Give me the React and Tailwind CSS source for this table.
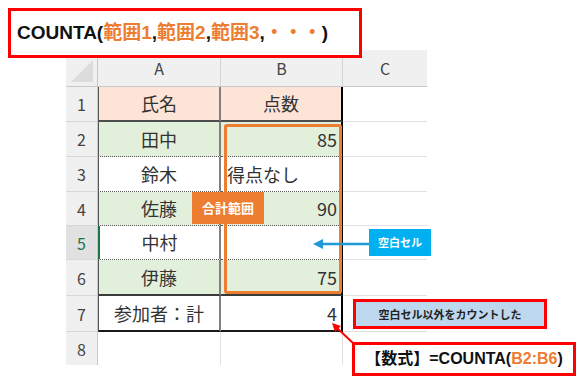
import React from "react";

const jp = "font-['Noto_Sans_CJK_JP',sans-serif]";
const orange = "text-[#ed7d31]";

const rows = [
  {
    n: "1",
    a: "氏名",
    b: "点数",
    h: "h-[35px]",
    bg: "bg-[#fce4d6]",
    line: "border-b-2 border-b-[#4d4d4d]",
    bAlign: "justify-center",
  },
  {
    n: "2",
    a: "田中",
    b: "85",
    h: "h-[35px]",
    bg: "bg-[#e2efda]",
    line: "border-b [border-bottom-style:dotted] border-b-[#555]",
    bAlign: "justify-end pr-[4px]",
  },
  {
    n: "3",
    a: "鈴木",
    b: "得点なし",
    h: "h-[35px]",
    bg: "bg-white",
    line: "border-b [border-bottom-style:dotted] border-b-[#555]",
    bAlign: "justify-start pl-[6px]",
  },
  {
    n: "4",
    a: "佐藤",
    b: "90",
    h: "h-[34px]",
    bg: "bg-[#e2efda]",
    line: "border-b [border-bottom-style:dotted] border-b-[#555]",
    bAlign: "justify-end pr-[4px]",
  },
  {
    n: "5",
    a: "中村",
    b: "",
    h: "h-[34px]",
    bg: "bg-white",
    line: "border-b [border-bottom-style:dotted] border-b-[#555]",
    bAlign: "justify-end pr-[4px]",
    active: true,
  },
  {
    n: "6",
    a: "伊藤",
    b: "75",
    h: "h-[36px]",
    bg: "bg-[#e2efda]",
    line: "border-b-2 border-b-[#3a3a3a]",
    bAlign: "justify-end pr-[4px]",
  },
  {
    n: "7",
    a: "参加者：計",
    b: "4",
    h: "h-[36px]",
    bg: "bg-white",
    line: "border-b-2 border-b-[#1a1a1a]",
    bAlign: "justify-end pr-[4px]",
  },
];

const SheetRow = ({ n, a, b, h, bg, line, bAlign, active }) => (
  <div className="flex">
    {/* row number */}
    <div
      className={`${h} w-[32px] flex items-center justify-center border-r border-b border-r-[#c8c8c8] border-b-[#d8d8d8] text-[16px] ${
        active ? "bg-[#e1e1e1] text-[#217346]" : "bg-[#f0f0f0] text-[#444]"
      }`}
    >
      {n}
    </div>
    <div
      className={`${h} w-[123px] ${bg} ${line} border-r-2 border-r-[#808080] ${
        active ? "border-l-2 border-l-[#217346]" : "border-l border-l-[#555]"
      } flex items-center justify-center text-[18px] text-[#333]`}
    >
      {a}
    </div>
    <div
      className={`${h} w-[122px] ${bg} ${line} border-r-2 border-r-black flex items-center ${bAlign} text-[18px] text-[#333]`}
    >
      {b}
    </div>
    <div className={`${h} w-[84px] bg-white border-b border-b-[#e1e1e1]`} />
  </div>
);

const App = () => {
  return (
    <div className={`w-[587px] h-[386px] bg-white overflow-hidden ${jp}`}>
      {/* Title */}
      <div className="relative z-10 mt-[8px] ml-[8px] w-[354px] h-[50px] border-[3px] border-[#ff0000] bg-white flex items-center pl-[6px]">
        <span className="font-['Liberation_Sans','Noto_Sans_CJK_JP',sans-serif] font-bold text-[19px] text-[#111] whitespace-nowrap">
          COUNTA(<span className={orange}>範囲1</span>,
          <span className={orange}>範囲2</span>,
          <span className={orange}>範囲3</span>,
          <span className={orange}>・・・</span>)
        </span>
      </div>

      {/* Sheet */}
      <div className="relative -mt-[8px] ml-[66px] w-[361px]">
        {/* Column headers */}
        <div className="flex h-[37px] bg-[#f0f0f0] text-[16px] text-[#444]">
          <div className="w-[32px] border-r border-b border-r-[#c8c8c8] border-b-[#c8c8c8] flex items-end justify-end p-[4px]">
            <svg width="22" height="22" viewBox="0 0 22 22">
              <polygon points="22,0 22,22 0,22" fill="#dcdcdc" />
            </svg>
          </div>
          <div className="w-[123px] border-r border-b border-r-[#d4d4d4] border-b-[#c8c8c8] flex items-center justify-center">
            A
          </div>
          <div className="w-[122px] border-r border-b border-r-[#d4d4d4] border-b-[#c8c8c8] flex items-center justify-center">
            B
          </div>
          <div className="w-[84px] border-b border-b-[#c8c8c8] flex items-center justify-center">
            C
          </div>
        </div>

        {rows.map((r) => (
          <SheetRow key={r.n} {...r} />
        ))}

        {/* Row 8 */}
        <div className="flex">
          <div className="h-[33px] w-[32px] flex items-center justify-center bg-[#f0f0f0] border-r border-r-[#c8c8c8] text-[16px] text-[#444]">
            8
          </div>
          <div className="h-[33px] w-[123px] border-r border-r-[#e1e1e1]" />
          <div className="h-[33px] w-[122px] border-r border-r-[#e1e1e1]" />
          <div className="h-[33px] w-[84px]" />
        </div>

        {/* Range highlight B2:B6 */}
        <div className="absolute left-[158px] top-[74px] w-[118px] h-[170px] border-[3px] border-[#ed7d31] rounded-[3px]" />

        {/* 合計範囲 label */}
        <div className="absolute left-[126px] top-[142px] w-[72px] h-[32px] bg-[#ed7d31] text-white font-bold text-[13px] flex items-center justify-center">
          合計範囲
        </div>

        {/* Blank cell arrow + label */}
        <svg className="absolute left-[247px] top-[188px]" width="58" height="12" viewBox="0 0 58 12">
          <line x1="8" y1="6" x2="58" y2="6" stroke="#1f9ad6" strokeWidth="2.5" />
          <polygon points="0,6 10,1 10,11" fill="#1f9ad6" />
        </svg>
        <div className="absolute left-[303px] top-[179px] w-[62px] h-[27px] bg-[#00b0f0] text-white font-bold text-[11px] flex items-center justify-center">
          空白セル
        </div>

        {/* Note */}
        <div className="absolute left-[287px] top-[249px] w-[194px] h-[30px] border-[3px] border-[#ff0000] bg-[#bdd7ee] text-[11px] font-bold text-[#222] flex items-center justify-center whitespace-nowrap">
          空白セル以外をカウントした
        </div>

        {/* Pointer to count */}
        <svg className="absolute left-[264px] top-[272px]" width="26" height="24" viewBox="0 0 26 24">
          <line x1="24" y1="22" x2="6" y2="5" stroke="#ff0000" strokeWidth="2" />
          <polygon points="2,1 11,4 5,10" fill="#ff0000" />
        </svg>

        {/* Formula */}
        <div className="absolute left-[286px] top-[292px] w-[224px] h-[34px] border-[3px] border-[#ff0000] bg-white flex items-center justify-center whitespace-nowrap">
          <span className="font-['Liberation_Sans','Noto_Sans_CJK_JP',sans-serif] font-bold text-[16px] text-[#111]">
            【数式】=COUNTA(<span className={orange}>B2:B6</span>)
          </span>
        </div>
      </div>
    </div>
  );
};

export default App;
